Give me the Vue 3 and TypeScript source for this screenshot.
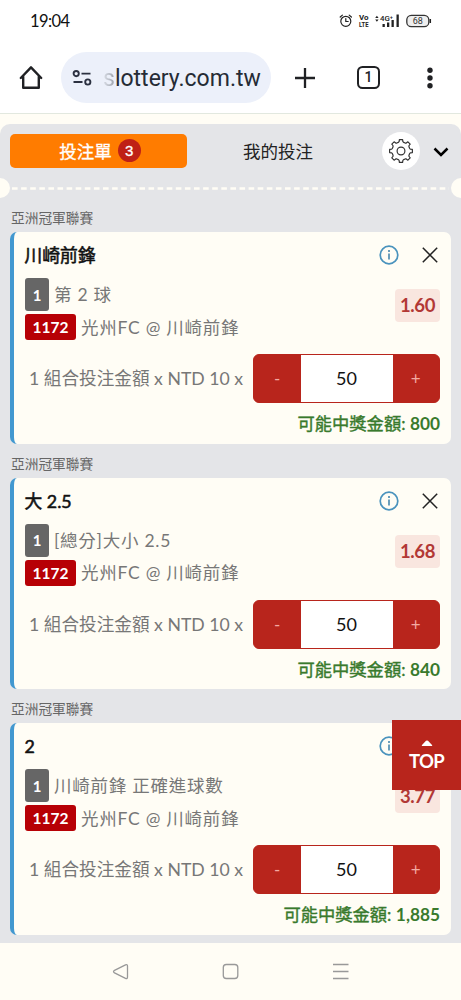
<script setup lang="ts">
interface Bet {
  league: string
  title: string
  market: string
  odds: string
  stake: number
  payout: string
}

const league = '亞洲冠軍聯賽'
const bets: Bet[] = [
  { league, title: '川崎前鋒', market: '第 2 球', odds: '1.60', stake: 50, payout: '800' },
  { league, title: '大 2.5', market: '[總分]大小 2.5', odds: '1.68', stake: 50, payout: '840' },
  { league, title: '2', market: '川崎前鋒 正確進球數', odds: '3.77', stake: 50, payout: '1,885' },
]

function gearPath(): string {
  const teeth = 8
  const pts: string[] = []
  for (let i = 0; i < teeth; i++) {
    const a = (i / teeth) * Math.PI * 2 - Math.PI / 2
    const steps: [number, number][] = [[-0.3, 8.3], [-0.2, 8.8], [-0.14, 10.6], [0.14, 10.6], [0.2, 8.8], [0.3, 8.3]]
    for (const [d, r] of steps) {
      pts.push(`${(12 + Math.cos(a + d) * r).toFixed(2)} ${(12 + Math.sin(a + d) * r).toFixed(2)}`)
    }
  }
  return `M${pts.join('L')}Z`
}
const gear = gearPath()
</script>

<template>
  <div class="phone">
    <div class="status">
      <span class="clock">19:04</span>
      <svg class="status-icons" width="94" height="18" viewBox="0 0 94 18">
        <g fill="none" stroke="#222" stroke-width="1.2" stroke-linecap="round">
          <circle cx="7.8" cy="9.3" r="5" />
          <path d="M7.8 6.5v3h2.4M2.2 5l2.2-1.9M13.4 5l-2.2-1.9" />
        </g>
        <g fill="#222" font-family="Roboto, sans-serif" font-weight="700">
          <text x="21" y="7.8" font-size="6.6" textLength="9.5" lengthAdjust="spacingAndGlyphs">Vo</text>
          <text x="21" y="15.4" font-size="6.6" textLength="9.5" lengthAdjust="spacingAndGlyphs">LTE</text>
          <text x="42" y="9.2" font-size="7.5" font-weight="500" textLength="13" lengthAdjust="spacingAndGlyphs">4G⁺</text>
          <path d="M37.200 6l1.700-2.200L40.600 6zM37.200 7.600h3.400l-1.700 2.200zM44.500 12h2.300v3h-2.300zM49 10.500h2.300V15H49zM53.500 8h2.300v7h-2.300zM58.500 2.500h2.300V15h-2.300z" />
        </g>
        <rect x="68.800" y="3.300" width="22" height="11.400" rx="4.500" fill="#eee" stroke="#333" stroke-width="1.300" />
        <path d="M92.300 7v4" stroke="#222" stroke-width="1.500" />
        <text x="79.800" y="12.300" font-size="9" text-anchor="middle" fill="#333" font-family="Roboto, sans-serif">68</text>
      </svg>
    </div>

    <div class="browser">
      <svg class="home" width="26" height="28" viewBox="0 0 26 28" fill="none" stroke="#202124" stroke-width="2.400" stroke-linejoin="round" stroke-linecap="round">
        <path d="M2.800 14L13 3.300 23.200 14M5.200 12.500V23.800h15.600V12.500" />
      </svg>
      <div class="address">
        <svg width="21" height="18" viewBox="0 0 21 18" fill="none" stroke="#2b3040" stroke-width="1.900">
          <circle cx="4.200" cy="4.600" r="2.600" /><path d="M9.500 4.600h9M1.500 13h9" /><circle cx="15.800" cy="13" r="2.600" />
        </svg>
        <span class="url"><span class="fade">s</span>lottery.com.tw</span>
      </div>
      <svg class="plus" width="22" height="22" viewBox="0 0 22 22" stroke="#202124" stroke-width="2.300"><path d="M11 1v20M1 11h20" /></svg>
      <span class="tabs">1</span>
      <svg class="dots" width="8" height="24" viewBox="0 0 8 24" fill="#202124"><circle cx="4" cy="4.200" r="2.700" /><circle cx="4" cy="12" r="2.700" /><circle cx="4" cy="19.800" r="2.700" /></svg>
    </div>

    <main class="slip">
      <header class="head">
        <button class="tab active"><span>投注單</span><span class="count">3</span></button>
        <button class="tab mine">我的投注</button>
        <span class="gear">
          <svg width="26" height="26" viewBox="0 0 24 24" fill="none" stroke="#333" stroke-width="1.100" stroke-linejoin="round">
            <path :d="gear" /><circle cx="12" cy="12" r="3.600" />
          </svg>
        </span>
        <svg class="chevron" width="16" height="12" viewBox="0 0 16 12" fill="none" stroke="#000" stroke-width="2.500"><path d="M1.500 2.500L8 9l6.500-6.500" /></svg>
      </header>
      <div class="tear">
        <span class="notch"></span>
        <svg class="dashes" width="441" height="3" viewBox="0 0 441 3"><path d="M2 1.500h437" stroke="#fffdf5" stroke-width="2.400" stroke-dasharray="5.600 3.500" /></svg>
        <span class="notch"></span>
      </div>

      <section v-for="bet in bets" :key="bet.title" class="bet">
        <div class="league">{{ bet.league }}</div>
        <article class="card">
          <div class="title-row">
            <span class="title">{{ bet.title }}</span>
            <svg class="info" width="20" height="20" viewBox="0 0 20 20">
              <circle cx="10" cy="10" r="8.800" fill="none" stroke="#4a93bd" stroke-width="1.700" />
              <path d="M10 8.500v6M10 5v2" stroke="#5b94b5" stroke-width="1.800" />
            </svg>
            <svg class="close" width="16" height="16" viewBox="0 0 16 16" stroke="#222" stroke-width="1.500"><path d="M.8.8l14.400 14.400M15.200.8L.8 15.200" /></svg>
          </div>
          <div class="details">
            <div class="lines">
              <div class="line"><span class="tag number">1</span><span class="text">{{ bet.market }}</span></div>
              <div class="line match"><span class="tag code">1172</span><span class="text">光州FC @ 川崎前鋒</span></div>
            </div>
            <span class="odds">{{ bet.odds }}</span>
          </div>
          <div class="stake-row">
            <span class="stake-label">1 組合投注金額 x NTD 10 x</span>
            <div class="stepper"><button>-</button><span class="amount">{{ bet.stake }}</span><button>+</button></div>
          </div>
          <div class="payout">可能中獎金額: <span class="sum">{{ bet.payout }}</span></div>
        </article>
      </section>
    </main>

    <nav class="nav">
      <svg width="461" height="57" viewBox="0 0 461 57" fill="none" stroke="#999" stroke-width="1.300" stroke-linejoin="round">
        <path d="M114.500 27.300Q112.500 28.600 114.500 29.900L125.500 35.400Q127.500 36 127.500 34V23Q127.500 21 125.500 21.800Z" />
        <rect x="223.300" y="21.500" width="14.500" height="14" rx="3" />
        <path d="M333 21.500h15.500M333 28.500h15.500M333 35.500h15.500" />
      </svg>
    </nav>

    <button class="top">
      <svg width="12" height="6" viewBox="0 0 12 6"><path d="M1 6q-.5-.5 0-1L5 .8q1-.8 2 0L11 5q.5.500 0 1z" fill="#fff" /></svg>
      <span>TOP</span>
    </button>
  </div>
</template>

<style>
body {
  overflow: hidden;
}
</style>

<style scoped>
* {
  box-sizing: border-box;
}
.phone {
  position: relative;
  width: 461px;
  height: 1000px;
  overflow: hidden;
  background: #fffdf5;
  font-family: Lato, "Noto Sans CJK TC", sans-serif;
  display: flex;
  flex-direction: column;
}
button {
  border: 0;
  padding: 0;
  font-family: inherit;
}
svg {
  display: block;
  flex: none;
}
.status {
  height: 42px;
  flex: none;
  background: #fff;
  display: flex;
  align-items: center;
  justify-content: space-between;
  padding: 0 29px 0 30px;
}
.clock {
  font: 16.500px/20px Lato, sans-serif;
  letter-spacing: -0.600px;
  color: #111;
}
.browser {
  height: 72px;
  flex: none;
  background: #fff;
  border-bottom: 1px solid #e2e8df;
  display: flex;
  align-items: center;
  padding-left: 18px;
}
.address {
  width: 210px;
  height: 51px;
  margin-left: 17px;
  border-radius: 26px;
  background: #ecf0fa;
  display: flex;
  align-items: center;
  padding-left: 11px;
}
.url {
  margin: 2px 0 0 10px;
  font: 23px/30px Roboto, sans-serif;
  color: #252b35;
  white-space: nowrap;
}
.fade {
  color: transparent;
  background: linear-gradient(90deg, #d5d9e2 10%, #9a9fa8);
  background-clip: text;
}
.plus {
  margin-left: 23px;
}
.tabs {
  width: 23px;
  height: 23px;
  margin-left: 41px;
  border: 2.300px solid #202124;
  border-radius: 5.500px;
  font: 500 14px/19px Roboto, sans-serif;
  text-align: center;
  color: #202124;
}
.dots {
  margin-left: 46px;
}
.slip {
  margin-top: 10px;
  height: 819px;
  flex: none;
  overflow: hidden;
  background: #e4e5e8;
  border-radius: 10px 10px 0 0;
}
.head {
  height: 54px;
  display: flex;
  align-items: center;
  padding-left: 10px;
}
.tab {
  font-size: 17.500px;
  height: 34px;
  padding-bottom: 1px;
}
.active {
  width: 177px;
  padding-left: 3px;
  border-radius: 5px;
  background: #ff7c00;
  color: #fff;
  -webkit-text-stroke: 0.300px #fff;
  display: flex;
  align-items: center;
  justify-content: center;
  gap: 6px;
}
.count {
  width: 23px;
  height: 23px;
  border-radius: 50%;
  background: #bf2016;
  font: 15px/23px "Liberation Sans", sans-serif;
}
.mine {
  margin-left: 56px;
  padding-bottom: 2px;
  background: transparent;
  color: #222;
}
.gear {
  width: 38px;
  height: 38px;
  margin-left: 69px;
  border-radius: 50%;
  background: #fff;
  display: grid;
  place-items: center;
}
.chevron {
  margin: 2px 0 0 13px;
}
.tear {
  height: 20px;
  margin: 0 -10px;
  display: flex;
  align-items: center;
  justify-content: space-between;
}
.notch {
  width: 20px;
  height: 20px;
  border-radius: 50%;
  background: #fffdf5;
}
.bet {
  height: 245.500px;
  padding: 0 10px;
}
.league {
  height: 34px;
  padding: 9px 0 0 1px;
  font-size: 13.700px;
  line-height: 22px;
  color: #666;
}
.card {
  height: 211.500px;
  border-left: 4px solid #4298d0;
  border-radius: 7px;
  background: #fffdf5;
  padding: 10px 11px 0 11px;
}
.title-row {
  height: 26px;
  display: flex;
  align-items: center;
}
.title {
  flex: 1;
  margin-left: -0.500px;
  font-size: 17.800px;
  line-height: 26px;
  -webkit-text-stroke: 0.550px #111;
  color: #111;
}
.info {
  margin-right: 23px;
}
.close {
  margin-right: 2px;
}
.details {
  height: 75px;
  padding-top: 10px;
  display: flex;
  justify-content: space-between;
}
.line {
  display: flex;
  align-items: center;
  height: 33px;
}
.match {
  height: 32px;
}
.tag {
  display: grid;
  place-items: center;
  border-radius: 3px;
  color: #fff;
  font-weight: 700;
  font-size: 15px;
}
.number {
  width: 24px;
  height: 33px;
  background: #666;
}
.code {
  width: 51px;
  height: 26px;
  font-size: 15.500px;
  background: #b70005;
}
.text {
  margin: -2px 0 0 5px;
  font-size: 17.500px;
  letter-spacing: 0.750px;
  color: #777;
  white-space: pre;
}
.odds {
  width: 45px;
  height: 33px;
  margin-top: 11px;
  border-radius: 4px;
  background: #f9e6df;
  color: #b23835;
  font-size: 18.500px;
  letter-spacing: -0.400px;
  line-height: 33px;
  font-weight: 700;
  text-align: center;
}
.stake-row {
  height: 49px;
  margin-top: 11px;
  display: flex;
  align-items: center;
  justify-content: space-between;
}
.stake-label {
  margin: -2px 0 0 4px;
  font-size: 17.650px;
  color: #777;
  white-space: nowrap;
}
.stepper {
  width: 187px;
  height: 49px;
  overflow: hidden;
  border: 1px solid #b8251c;
  border-radius: 6px;
  display: flex;
  background: #b8251c;
}
.stepper button {
  flex: 1;
  background: #b8251c;
  color: #f3aaa1;
  font-size: 17px;
}
.amount {
  width: 92px;
  background: #fff;
  color: #111;
  font-size: 18px;
  line-height: 46px;
  text-align: center;
}
.payout {
  margin-top: 8px;
  font-size: 17.300px;
  line-height: 26px;
  -webkit-text-stroke: 0.400px #397a2d;
  color: #397a2d;
  text-align: right;
}
.sum {
  font-weight: 700;
  -webkit-text-stroke: 0;
}
.nav {
  height: 57px;
}
.top {
  position: absolute;
  left: 392px;
  top: 720px;
  width: 69px;
  height: 70px;
  background: #b8251c;
  color: #fff;
  font-size: 18.500px;
  letter-spacing: -0.700px;
  font-weight: 700;
  line-height: 24px;
  display: flex;
  flex-direction: column;
  align-items: center;
  padding-top: 20px;
  gap: 3px;
}
</style>
